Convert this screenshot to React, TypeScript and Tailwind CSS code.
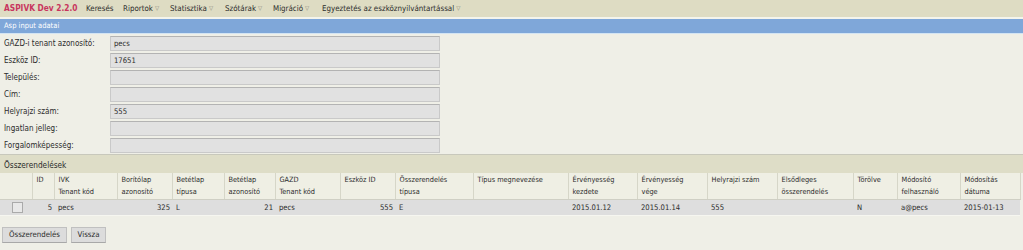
import React from 'react';

const FONT = { fontFamily: '"DejaVu Sans Condensed", Tahoma, "Liberation Sans", sans-serif' };

// menu items with the box width each one takes in the bar
const NAV = [
  { t: 'Riportok', w: 'w-[47px]' },
  { t: 'Statisztika', w: 'w-[55px]' },
  { t: 'Szótárak', w: 'w-[48px]' },
  { t: 'Migráció', w: 'w-[49px]' },
  { t: 'Egyeztetés az eszköznyilvántartással', w: '' },
];

const FIELDS = [
  { label: 'GAZD-i tenant azonosító:', value: 'pecs' },
  { label: 'Eszköz ID:', value: '17651' },
  { label: 'Település:', value: '' },
  { label: 'Cím:', value: '' },
  { label: 'Helyrajzi szám:', value: '555' },
  { label: 'Ingatlan jelleg:', value: '' },
  { label: 'Forgalomképesség:', value: '' },
];

// column widths taken from the separators in the screenshot
const COLS = [
  { w: 'w-[32px]', h: [''], v: '', r: false },
  { w: 'w-[22px]', h: ['ID'], v: '5', r: true },
  { w: 'w-[63px]', h: ['IVK', 'Tenant kód'], v: 'pecs', r: false },
  { w: 'w-[55px]', h: ['Borítólap', 'azonosító'], v: '325', r: true },
  { w: 'w-[52px]', h: ['Betétlap', 'típusa'], v: 'L', r: false },
  { w: 'w-[51px]', h: ['Betétlap', 'azonosító'], v: '21', r: true },
  { w: 'w-[65px]', h: ['GAZD', 'Tenant kód'], v: 'pecs', r: false },
  { w: 'w-[55px]', h: ['Eszköz ID'], v: '555', r: true },
  { w: 'w-[78px]', h: ['Összerendelés', 'típusa'], v: 'E', r: false },
  { w: 'w-[95px]', h: ['Típus megnevezése'], v: '', r: false },
  { w: 'w-[69px]', h: ['Érvényesség', 'kezdete'], v: '2015.01.12', r: false },
  { w: 'w-[70px]', h: ['Érvényesség', 'vége'], v: '2015.01.14', r: false },
  { w: 'w-[70px]', h: ['Helyrajzi szám'], v: '555', r: false },
  { w: 'w-[76px]', h: ['Elsődleges', 'összerendelés'], v: '', r: false },
  { w: 'w-[44px]', h: ['Törölve'], v: 'N', r: false },
  { w: 'w-[63px]', h: ['Módosító', 'felhasználó'], v: 'a@pecs', r: false },
  { w: 'w-[60px]', h: ['Módosítás', 'dátuma'], v: '2015-01-13', r: false },
];

const Caret = () => <span className="ml-[2px] text-[6px] text-[#8a8a7a] align-[1px]">▽</span>;

const App: React.FC = () => {
  return (
    <div className="w-[1023px] h-[250px] bg-[#efefe7] text-[8px] text-[#2c2c2c] overflow-hidden" style={FONT}>
      {/* Top menu */}
      <div className="flex h-[17px] items-center bg-[#dedcc3] pl-[4px] leading-none whitespace-nowrap text-[7.9px]">
        <span className="w-[82px] font-bold text-[8.3px] text-[#c8365e]">ASPIVK Dev 2.2.0</span>
        <span className="w-[37px]">Keresés</span>
        {NAV.map((n) => (
          <span key={n.t} className={n.w}>
            {n.t}
            <Caret />
          </span>
        ))}
      </div>
      <div className="h-[2px] bg-[#f4f4ec]" />

      {/* Asp input adatai */}
      <div className="h-[15px] bg-[#7fa7d9] border-b border-[#d3e4f3] text-white text-[7.5px] pl-[4px] leading-[14px]">Asp input adatai</div>
      <div className="pt-[1px]">
        {FIELDS.map((f) => (
          <div key={f.label} className="flex items-center h-[17px]">
            <div className="w-[110px] pl-[4px] whitespace-nowrap">{f.label}</div>
            <div className="w-[330px] h-[15px] bg-[#e1e1e1] border border-[#c9c9c9] border-t-[#b3b3b3] pl-[3px] leading-[13px] text-[7.6px]">
              {f.value}
            </div>
          </div>
        ))}
      </div>

      {/* Összerendelések */}
      <div className="border-t border-[#c8c8bc] h-[19px] bg-[#deddc7] pl-[4px] pt-[4px] leading-[13px] text-[8.2px]">Összerendelések</div>
      <table className="border-collapse table-fixed w-[1020px] text-[7.3px]">
        <thead>
          <tr className="bg-[#efefe4]">
            {COLS.map((c, i) => (
              <th
                key={i}
                className={`${c.w} h-[26px] align-top text-left font-normal pl-[4px] pt-[1px] leading-[12px] border-r border-[#d6d6c8] border-b border-b-[#cfcfc4] overflow-hidden`}
              >
                {c.h.map((l) => (
                  <div key={l} className="whitespace-nowrap">{l}</div>
                ))}
              </th>
            ))}
          </tr>
        </thead>
        <tbody>
          <tr className="bg-[#dedede] text-[7.6px]">
            {COLS.map((c, i) => (
              <td
                key={i}
                className={`h-[15px] leading-[15px] whitespace-nowrap ${c.r ? 'text-right pr-[2px]' : 'text-left pl-[4px]'}`}
              >
                {i === 0 ? (
                  <div className="ml-[8px] w-[11px] h-[11px] border border-[#aaa] bg-[#e8e8e8]" />
                ) : (
                  c.v
                )}
              </td>
            ))}
          </tr>
        </tbody>
      </table>
      <div className="h-[1px] w-[1020px] bg-[#f6f6f0]" />

      {/* Buttons */}
      <div className="flex gap-[4px] pl-[2px] pt-[11px]">
        <button className="w-[65px] h-[16px] bg-[#dcdcdc] border border-[#c0c0c0] border-b-[#a8a8a8] text-[7.8px] leading-[14px] text-[#2c2c2c]">
          Összerendelés
        </button>
        <button className="w-[35px] h-[16px] bg-[#dcdcdc] border border-[#c0c0c0] border-b-[#a8a8a8] text-[7.8px] leading-[14px] text-[#2c2c2c]">
          Vissza
        </button>
      </div>
    </div>
  );
};

export default App;
